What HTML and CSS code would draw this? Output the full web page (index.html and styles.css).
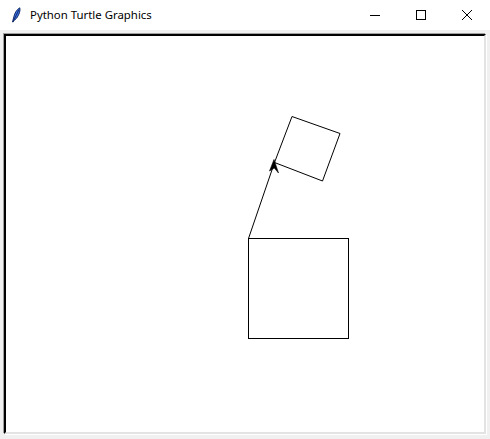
FILE: index.html
```html
<!DOCTYPE html>
<html>
<head>
<meta charset="utf-8">
<link rel="stylesheet" href="styles.css">
</head>
<body>
<div class="window">
  <div class="titlebar">
    <div class="title-left">
      <svg class="app-icon" width="16" height="16" viewBox="0 0 16 16">
        <path d="M4.5 15 L5.8 10 C6.6 6 8.8 2.5 11.8 0.8 C12.6 3.5 11.2 7.8 8.6 11.2 C7.6 12.4 6.6 13.1 5.8 13.4 L5.2 15 Z" fill="#3a6fe0" stroke="#0a1e5a" stroke-width="0.9"/>
        <path d="M5.4 14 L10.8 3" stroke="#0a1e5a" stroke-width="0.8"/>
      </svg>
      <span class="title-text">Python Turtle Graphics</span>
    </div>
    <div class="controls">
      <div class="ctl">
        <svg width="12" height="12" viewBox="0 0 12 12"><path d="M1 6.5 H11" stroke="#000" stroke-width="1"/></svg>
      </div>
      <div class="ctl">
        <svg width="12" height="12" viewBox="0 0 12 12"><rect x="1.5" y="1.5" width="9" height="9" fill="none" stroke="#000" stroke-width="1"/></svg>
      </div>
      <div class="ctl">
        <svg width="12" height="12" viewBox="0 0 12 12"><path d="M1 1 L11 11 M11 1 L1 11" stroke="#000" stroke-width="1"/></svg>
      </div>
    </div>
  </div>
  <div class="body">
    <div class="canvas">
      <svg class="drawing" width="478" height="396" viewBox="0 0 478 396">
        <g transform="translate(-6,-36)" fill="none" stroke="#000" stroke-width="1">
          <rect x="248.5" y="238.5" width="100" height="100"/>
          <path d="M248.5 238.5 L274.5 162.5"/>
          <path d="M274.5 162.5 L292 116.5 L340 133.5 L322.5 181 L274.5 162.5"/>
          <path d="M274 159.5 L269.5 171 L274.3 168 L278.5 173 Z" fill="#000" stroke="#000" stroke-width="0.6"/>
        </g>
      </svg>
    </div>
  </div>
</div>
</body>
</html>
```

FILE: styles.css
```css
html, body {
  margin: 0;
  padding: 0;
  width: 490px;
  height: 439px;
  overflow: hidden;
  background: #f0f0f0;
}
.window {
  display: flex;
  flex-direction: column;
  width: 490px;
  height: 439px;
  font-family: "Noto Sans", "Open Sans", sans-serif;
}
.titlebar {
  height: 30px;
  background: #fff;
  display: flex;
  align-items: center;
  justify-content: space-between;
  flex: none;
}
.title-left {
  display: flex;
  align-items: center;
  padding-left: 8px;
}
.app-icon {
  display: block;
  margin-right: 6px;
}
.title-text {
  font-size: 11.4px;
  color: #000;
  line-height: 16px;
}
.controls {
  display: flex;
  height: 30px;
}
.ctl {
  width: 46px;
  height: 30px;
  display: flex;
  align-items: center;
  justify-content: center;
}
.ctl svg { display: block; }
.body {
  flex: 1;
  background: #f0f0f0;
  padding: 4px 4px 5px 4px;
  display: flex;
}
.canvas {
  flex: 1;
  background: #fff;
  border-style: solid;
  border-width: 2px;
  border-color: #000 #e3e3e3 #e3e3e3 #000;
  box-shadow: -1px -1px 0 #a0a0a0, 1px 1px 0 #fff;
  overflow: hidden;
}
.drawing { display: block; }
```
